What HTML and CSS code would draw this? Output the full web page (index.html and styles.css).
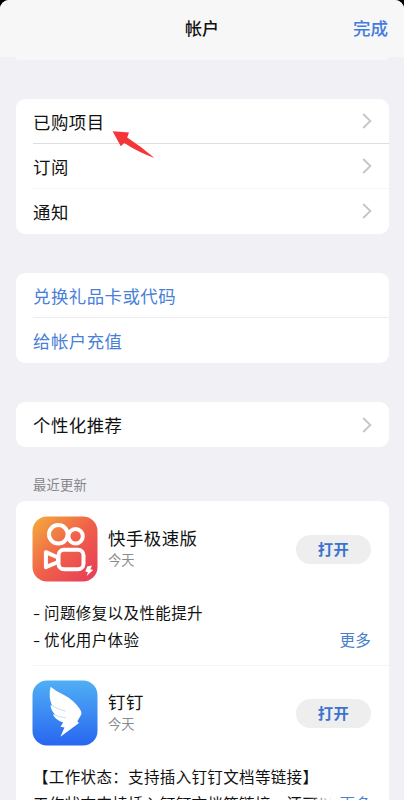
FILE: index.html
```html
<!DOCTYPE html>
<html lang="zh-CN">
<head>
<meta charset="utf-8">
<title>帐户</title>
<link rel="stylesheet" href="styles.css">
</head>
<body>
<div class="sheet">
  <header class="navbar">
    <h1 class="navbar-title">帐户</h1>
    <a class="navbar-done">完成</a>
  </header>
  <div class="card-tail"></div>
  <main class="content">
    <section class="card menu">
      <div class="row"><span>已购项目</span><svg class="chevron" viewBox="0 0 10 16"><path d="M1.2 1 8.4 8 1.2 15"/></svg></div>
      <div class="row row-strong"><span>订阅</span><svg class="chevron" viewBox="0 0 10 16"><path d="M1.2 1 8.4 8 1.2 15"/></svg></div>
      <div class="row row-faint"><span>通知</span><svg class="chevron" viewBox="0 0 10 16"><path d="M1.2 1 8.4 8 1.2 15"/></svg></div>
      <svg class="pointer" viewBox="0 0 44 30"><path d="M.6 1.2 17 2.4 15.2 7.4Q30 17 42.5 28Q27 22.5 12.2 13L8.8 16.2Z"/></svg>
    </section>
    <section class="card links">
      <div class="row"><span>兑换礼品卡或代码</span></div>
      <div class="row row-light"><span>给帐户充值</span></div>
    </section>
    <section class="card">
      <div class="row"><span>个性化推荐</span><svg class="chevron" viewBox="0 0 10 16"><path d="M1.2 1 8.4 8 1.2 15"/></svg></div>
    </section>
    <h2 class="section-label">最近更新</h2>
    <section class="card updates">
      <article class="app">
        <div class="app-head">
          <svg class="app-icon" viewBox="0 0 66 66">
            <defs><linearGradient id="warm" x1="0" y1="0" x2="1" y2="1"><stop offset="0" stop-color="#f4ae3c"/><stop offset=".5" stop-color="#f0604a"/><stop offset="1" stop-color="#e63a58"/></linearGradient></defs>
            <rect x=".5" y=".5" width="65" height="65" rx="14.5" fill="url(#warm)"/>
            <g fill="none" stroke="#fff" stroke-width="4" stroke-linejoin="round">
              <circle cx="26.3" cy="18.3" r="9.3"/>
              <circle cx="43.6" cy="20.3" r="7.2"/>
              <rect x="26.5" y="33.8" width="25" height="19.5" rx="5.5"/>
              <path d="M13.9 36.2 26 41.5v4.5L13.9 51.2Z"/>
            </g>
            <path d="M55.2 50.5 60 49.5 58.4 53.3 61.2 54 54.5 60 56 56.2 53.3 55.5Z" fill="#fff"/>
          </svg>
          <div class="app-info"><h3 class="app-name">快手极速版</h3><p class="app-date">今天</p></div>
          <button class="open">打开</button>
        </div>
        <div class="notes"><p><span class="dash">-</span>问题修复以及性能提升</p><p><span class="dash">-</span>优化用户体验</p><a class="more">更多</a></div>
      </article>
      <article class="app app-next">
        <div class="app-head">
          <svg class="app-icon" viewBox="0 0 66 66">
            <defs><linearGradient id="sky" x1="0" y1="0" x2="0" y2="1"><stop offset="0" stop-color="#50aff5"/><stop offset="1" stop-color="#2866f0"/></linearGradient></defs>
            <rect x=".5" y=".5" width="65" height="65" rx="14.5" fill="url(#sky)"/>
            <path d="M18.6 6.8Q24 11.5 32 14.9Q42 20 47.8 29Q50.4 32.5 48.9 35.3L45.3 41.3 47 43 28.4 56.8 32.5 47.4 28.5 46.8 31.2 42.6Q23 39.5 20.8 34.2L23 34.6Q18.8 30 18.5 25.2L20 25.6Q16.2 17 18.6 6.8Z" fill="#fff"/>
            <path d="M18.8 25.2Q26 29.5 34 31.2M21 34.2Q28 37.5 34 37.8" fill="none" stroke="#9cc8f9" stroke-width=".6"/>
          </svg>
          <div class="app-info"><h3 class="app-name">钉钉</h3><p class="app-date">今天</p></div>
          <button class="open">打开</button>
        </div>
        <div class="notes notes-tight"><p>【工作状态：支持插入钉钉文档等链接】</p><p>工作状态支持插入钉钉文档等链接，还可以</p><a class="more more-fade">更多</a></div>
      </article>
    </section>
  </main>
</div>
</body>
</html>
```
FILE: styles.css
```css
* { box-sizing: border-box; margin: 0; padding: 0; }

body {
  height: 800px;
  overflow: hidden;
  background: #000;
  color: #111;
  font-family: "Noto Sans CJK SC", sans-serif;
}

.sheet {
  height: 800px;
  overflow: hidden;
  background: #f0f0f5;
  border-radius: 9px 9px 0 0;
}

.navbar {
  display: grid;
  grid-template-columns: 1fr auto 1fr;
  align-items: center;
  height: 57px;
  padding: 0 16px 2px;
  background: #f7f7f7;
}

.navbar-title {
  grid-column: 2;
  font-size: 17px;
  font-weight: 500;
  line-height: 24px;
}

.navbar-done {
  justify-self: end;
  color: #447be0;
  font-size: 17.5px;
  font-weight: 500;
  line-height: 24px;
}

.card-tail {
  height: 3px;
  margin: 0 16px;
  background: #f8f8f9;
  border-radius: 0 0 9px 9px;
}

.content { padding: 39px 15px 0 16px; }

.card {
  position: relative;
  margin-bottom: 39px;
  padding-left: 17px;
  background: #fff;
  border-radius: 9px;
}

.row {
  display: flex;
  align-items: center;
  justify-content: space-between;
  height: 45px;
  padding-right: 17px;
  font-size: 17.4px;
  letter-spacing: .5px;
}

.row-strong { border-top: 1px solid #dedede; }
.row-faint { border-top: 1px solid #f7f7f8; }
.row-light { border-top: 1px solid #ececf0; }

.menu .row:first-child,
.links .row:first-child { height: 44px; }
.menu { padding-bottom: 1px; }
.links { padding-bottom: 1px; }
.links .row { color: #4880d8; }

.chevron {
  width: 10px;
  height: 16px;
  fill: none;
  stroke: #c5c5c7;
  stroke-width: 1.8;
}

.pointer {
  position: absolute;
  left: 96px;
  top: 31px;
  width: 44px;
  height: 30px;
  fill: #f53638;
}

.links + .card { margin-bottom: 28px; }

.section-label {
  height: 26px;
  padding-left: 17px;
  color: #858589;
  font-size: 13.3px;
  font-weight: 400;
  line-height: 19px;
  letter-spacing: .2px;
}

.app-head {
  display: flex;
  align-items: center;
  height: 66px;
  margin-right: 18px;
}

.app { height: 164px; padding-top: 15px; }
.app-next { border-top: 1px solid #f4f4f5; }
.app-next .app-head { margin-top: -1px; }

.app-icon { width: 66px; height: 66px; margin-left: -1px; }
.app-info { flex: 1; margin: -3px 0 0 10px; }

.app-name {
  font-size: 17.4px;
  font-weight: 400;
  line-height: 24px;
  letter-spacing: .5px;
}

.app-date {
  color: #8b8b8e;
  font-size: 13.3px;
  line-height: 20px;
}

.open {
  width: 75px;
  height: 29px;
  padding-bottom: 2px;
  border: 0;
  border-radius: 15px;
  background: #eeeeef;
  color: #3c72ce;
  font: 700 15.3px/27px "Noto Sans CJK SC", sans-serif;
  letter-spacing: .4px;
}

.notes {
  position: relative;
  margin: 17px 18px 0 0;
  font-size: 15.5px;
  line-height: 26.5px;
  letter-spacing: .4px;
  white-space: nowrap;
}

.notes-tight { margin-top: 17px; letter-spacing: .35px; }

.dash {
  display: inline-block;
  width: 11px;
  transform: scaleX(1.35);
  transform-origin: left;
}

.more {
  position: absolute;
  right: 0;
  bottom: 0;
  color: #4880cc;
  letter-spacing: .2px;
}

.more-fade {
  padding-left: 32px;
  background: linear-gradient(90deg, rgba(255, 255, 255, 0), #fff 24px);
}
```
